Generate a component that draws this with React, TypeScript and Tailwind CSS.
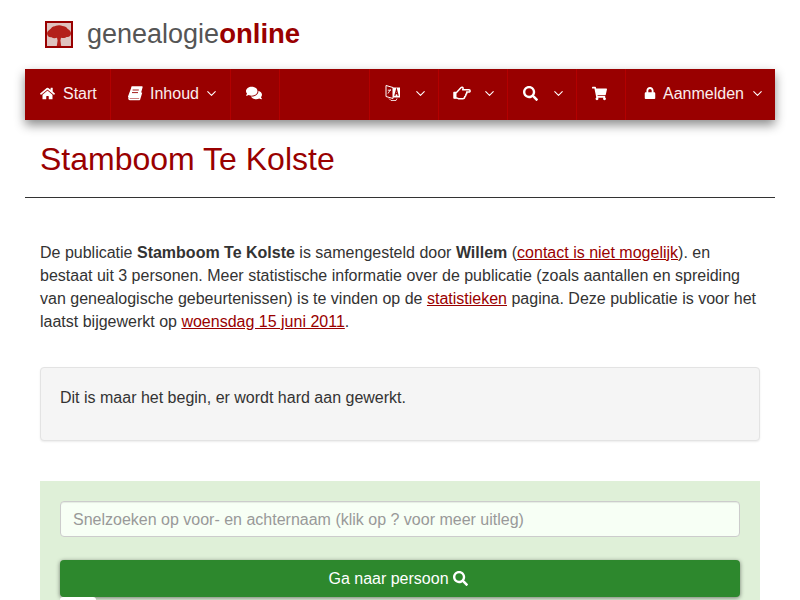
import React from "react";
import { ChevronDown } from "lucide-react";
import { FaHome, FaComments, FaSearch, FaShoppingCart, FaLock } from "react-icons/fa";

const Chev = () => <ChevronDown size={15} strokeWidth={1.7} className="text-white" />;

const Lang = () => (
  <svg width="16" height="18" viewBox="0 0 16 18" fill="none">
    <path d="M1 1.5 L8 3.5 V14.5 L1 12.5 Z" stroke="#fff" strokeWidth="1" fill="none" />
    <path d="M8 3.5 H15 V13.5 H8 Z" fill="#fff" />
    <path d="M3 9.5 L5.5 5.5 M2.8 6.2 H6" stroke="#fff" strokeWidth="0.9" />
    <path d="M9.8 11.8 L11.5 5.5 L13.2 11.8 M10.5 9.7 H12.5" stroke="#990000" strokeWidth="1.2" />
    <path d="M4 14.5 L6 16.5 H11 L12 14.5" stroke="#fff" strokeWidth="0.8" />
  </svg>
);

const Book = () => (
  <svg width="16" height="15" viewBox="0 0 16 15" fill="none">
    <path d="M4.5 1 H15 L12 11.5 H2.6 C1.6 11.5 1.6 13.5 2.8 13.5 H12.5 L14.6 6.5" stroke="#fff" strokeWidth="1.3" strokeLinejoin="round" />
    <path d="M4.5 1 H15 L12 11.5 H2.4 C1.4 11.5 1 11.8 1 10.5 Z" fill="#fff" />
    <path d="M5.6 4 H11.8 M5 6.6 H11" stroke="#990000" strokeWidth="0.9" />
  </svg>
);

const Hand = () => (
  <svg width="18" height="15" viewBox="0 0 18 15" fill="none">
    <path
      d="M1 6.4 H3.5 L7.2 2.6 C7.7 1.5 8.3 1 9.3 1.2 C10.4 1.5 10.2 2.9 9.7 3.8 H16 C17.5 3.8 17.5 6 16 6 H13.6 C14.1 7 13.7 8.1 12.8 8.3 C13.1 9.3 12.6 10.4 11.8 10.6 C11.8 11.9 11.1 12.8 9.8 12.8 H6.2 C5.1 12.8 4.7 12 3.7 12 H1 Z"
      stroke="#fff"
      strokeWidth="1.5"
      strokeLinejoin="round"
    />
    <rect x="1" y="6.4" width="2.5" height="6" fill="#fff" />
  </svg>
);

function Item({ className, children }: { className: string; children?: React.ReactNode }) {
  return (
    <div className={"flex items-center h-full pb-[3px] border-r border-[#b30000] shrink-0 " + className}>{children}</div>
  );
}

const Tree = () => (
  <svg width="24" height="23" viewBox="0 0 24 23" className="block">
    <rect width="24" height="23" fill="#dfc3bf" />
    <path
      d="M0 10 C0.5 7.5 2.5 7 4 5.5 C5 3.5 7.5 3.5 9 2.8 C11 1.8 14 2 15.5 3 C17.5 3 19.5 4 20.5 5.8 C22.5 6.8 24 8.5 24 10.5 C24 13 22 14.5 19.5 14 C18 15.5 15.5 15 14 14.8 L13.4 17.5 L14.2 23 H9.8 L10.6 17.5 L10 14.8 C8 15.5 6 15.5 4.5 14.2 C2 14.5 0 13 0 10 Z"
      fill="#b3201a"
    />
  </svg>
);

export default function App() {
  return (
    <div className="w-[800px] h-[600px] overflow-hidden bg-white text-[16px] leading-[23px] text-[#333333] font-['Liberation_Sans',Arial,sans-serif]">
      <div className="flex items-center h-[69px] pl-[45px]">
        <div className="border-2 border-[#990000] box-content w-[24px] h-[23px] overflow-hidden shrink-0">
          <Tree />
        </div>
        <div className="ml-[14px] mb-[2px] text-[27px] leading-[32px] text-[#555555]">
          genealogie<span className="font-bold text-[#990000] text-[27.5px]">online</span>
        </div>
      </div>

      <div className="mx-[25px] h-[51px] bg-[#990000] text-white flex items-center shadow-[0_5px_10px_rgba(0,0,0,0.45)]">
        <Item className="w-[86px] pl-[15px] gap-[8px]">
          <FaHome size={15} />
          <span className="text-[#fbeeee]">Start</span>
        </Item>
        <Item className="w-[120px] pl-[16px]">
          <Book />
          <span className="ml-[7px] text-[#fbeeee]">Inhoud</span>
          <span className="ml-[5px]"><Chev /></span>
        </Item>
        <Item className="w-[49px] pl-[15px]">
          <FaComments size={16} />
        </Item>
        <Item className="w-[90px]" />
        <Item className="w-[69px] pl-[15px]">
          <Lang />
          <span className="ml-[12px]"><Chev /></span>
        </Item>
        <Item className="w-[69px] pl-[14px]">
          <Hand />
          <span className="ml-[11px]"><Chev /></span>
        </Item>
        <Item className="w-[69px] pl-[15px]">
          <FaSearch size={15} />
          <span className="ml-[13px]"><Chev /></span>
        </Item>
        <Item className="w-[49px] pl-[15px]">
          <FaShoppingCart size={15} />
        </Item>
        <div className="flex items-center h-full pb-[3px] pl-[18px]">
          <FaLock size={12} />
          <span className="ml-[7px] text-[#fbeeee]">Aanmelden</span>
          <span className="ml-[6px]"><Chev /></span>
        </div>
      </div>

      <div className="mx-[25px] border-b border-[#333333] h-[78px] pl-[15px] pt-[19px]">
        <h1 className="text-[32px] leading-[40px] text-[#990000]">Stamboom Te Kolste</h1>
      </div>

      <div className="px-[40px]">
        <p className="mt-[43px]">
          De publicatie <b>Stamboom Te Kolste</b> is samengesteld door <b>Willem</b> (<a className="text-[#990000] underline">contact is niet mogelijk</a>). en bestaat uit 3 personen. Meer statistische informatie over de publicatie (zoals aantallen en spreiding van genealogische gebeurtenissen) is te vinden op de <a className="text-[#990000] underline">statistieken</a> pagina. Deze publicatie is voor het laatst bijgewerkt op <a className="text-[#990000] underline">woensdag 15 juni 2011</a>.
        </p>

        <div className="mt-[34px] h-[74px] bg-[#f5f5f5] border border-[#e3e3e3] rounded-[4px] px-[19px] pt-[18px] shadow-[0_1px_2px_rgba(0,0,0,0.08)]">
          Dit is maar het begin, er wordt hard aan gewerkt.
        </div>

        <div className="mt-[40px] h-[140px] bg-[#dff0d8] px-[20px] pt-[20px]">
          <div className="h-[36px] bg-[#f7fff5] border border-[#cccccc] rounded-[4px] px-[12px] flex items-center text-[#999999] shadow-[inset_0_1px_1px_rgba(0,0,0,0.075)]">
            Snelzoeken op voor- en achternaam (klik op ? voor meer uitleg)
          </div>
          <div className="mt-[23px] h-[37px] pr-[4px] bg-[#2d882d] rounded-[4px] text-white flex items-center justify-center gap-[4px] shadow-[0_1px_4px_rgba(0,0,0,0.5)]">
            <span>Ga naar persoon</span>
            <FaSearch size={15} />
          </div>
          <div className="relative w-[36px] h-[6px] bg-white rounded-t-[3px]" />
        </div>
      </div>
    </div>
  );
}
